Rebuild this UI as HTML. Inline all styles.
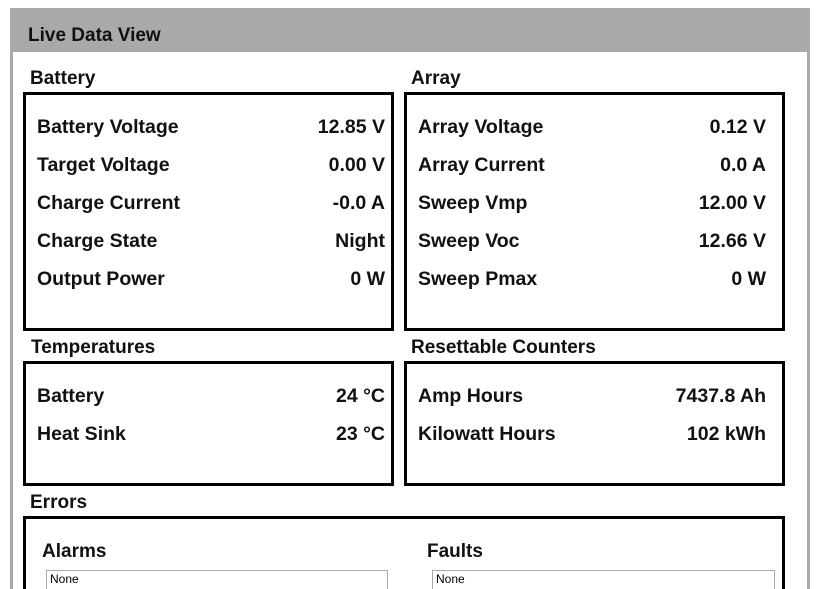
<!DOCTYPE html>
<html style="height:589px;overflow:hidden"><head><style>
body{margin:0;background:#fff;width:818px;height:589px;overflow:hidden;position:relative;font-family:"Liberation Sans",Arial,sans-serif;}
.frame{position:absolute;left:10px;top:8px;width:800px;height:581px;background:#a9a9a9;}
.hdr{position:absolute;left:28px;top:25px;font-size:19px;font-weight:bold;color:#111;}
.inner{position:absolute;left:13px;top:52px;width:794px;height:537px;background:#fff;}
.t{position:absolute;font-size:19px;font-weight:bold;color:#111;}
.box{position:absolute;border:3px solid #000;box-sizing:border-box;}
.r{position:absolute;font-size:19.5px;font-weight:bold;color:#111;}
.v{text-align:right;}
.none{position:absolute;border:1px solid #aaa;height:30px;font-size:12px;padding:1px 3px;box-sizing:border-box;}
</style></head><body>
<div class="frame"></div>
<div class="inner"></div>
<div class="hdr">Live Data View</div>

<div class="t" style="left:30px;top:68px">Battery</div>
<div class="t" style="left:411px;top:68px">Array</div>
<div class="box" style="left:23px;top:92px;width:371px;height:239px"></div>
<div class="box" style="left:404px;top:92px;width:381px;height:239px"></div>

<div class="r" style="left:37px;top:116px">Battery Voltage</div>
<div class="r" style="left:37px;top:154px">Target Voltage</div>
<div class="r" style="left:37px;top:192px">Charge Current</div>
<div class="r" style="left:37px;top:230px">Charge State</div>
<div class="r" style="left:37px;top:268px">Output Power</div>
<div class="r v" style="right:433px;top:116px">12.85 V</div>
<div class="r v" style="right:433px;top:154px">0.00 V</div>
<div class="r v" style="right:433px;top:192px">-0.0 A</div>
<div class="r v" style="right:433px;top:230px">Night</div>
<div class="r v" style="right:433px;top:268px">0 W</div>

<div class="r" style="left:418px;top:116px">Array Voltage</div>
<div class="r" style="left:418px;top:154px">Array Current</div>
<div class="r" style="left:418px;top:192px">Sweep Vmp</div>
<div class="r" style="left:418px;top:230px">Sweep Voc</div>
<div class="r" style="left:418px;top:268px">Sweep Pmax</div>
<div class="r v" style="right:52px;top:116px">0.12 V</div>
<div class="r v" style="right:52px;top:154px">0.0 A</div>
<div class="r v" style="right:52px;top:192px">12.00 V</div>
<div class="r v" style="right:52px;top:230px">12.66 V</div>
<div class="r v" style="right:52px;top:268px">0 W</div>

<div class="t" style="left:31px;top:337px">Temperatures</div>
<div class="t" style="left:411px;top:337px">Resettable Counters</div>
<div class="box" style="left:23px;top:361px;width:371px;height:125px"></div>
<div class="box" style="left:404px;top:361px;width:381px;height:125px"></div>
<div class="r" style="left:37px;top:385px">Battery</div>
<div class="r" style="left:37px;top:423px">Heat Sink</div>
<div class="r v" style="right:433px;top:385px">24 °C</div>
<div class="r v" style="right:433px;top:423px">23 °C</div>
<div class="r" style="left:418px;top:385px">Amp Hours</div>
<div class="r" style="left:418px;top:423px">Kilowatt Hours</div>
<div class="r v" style="right:52px;top:385px">7437.8 Ah</div>
<div class="r v" style="right:52px;top:423px">102 kWh</div>

<div class="t" style="left:30px;top:492px">Errors</div>
<div class="box" style="left:23px;top:516px;width:762px;height:100px"></div>
<div class="t" style="left:42px;top:541px">Alarms</div>
<div class="t" style="left:427px;top:541px">Faults</div>
<div class="none" style="left:46px;top:570px;width:342px">None</div>
<div class="none" style="left:432px;top:570px;width:343px">None</div>
</body></html>
